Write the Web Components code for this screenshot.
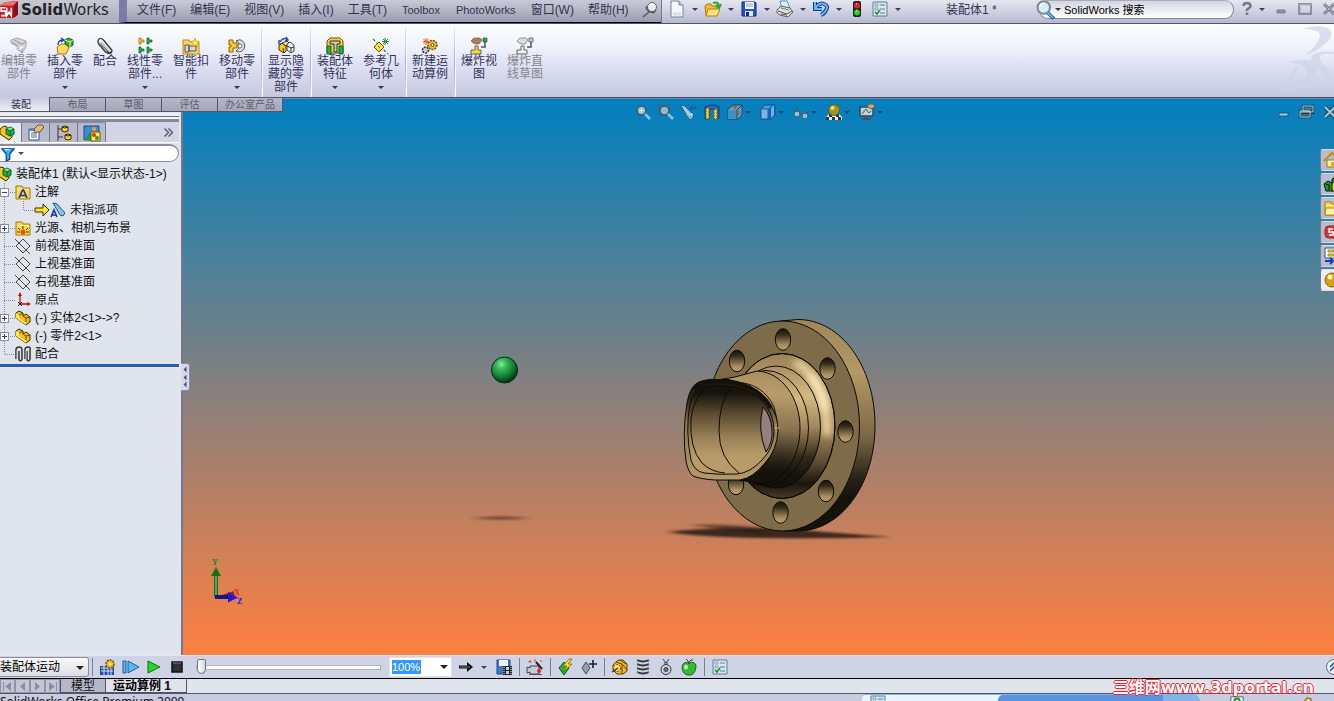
<!DOCTYPE html>
<html lang="zh-CN">
<head>
<meta charset="utf-8">
<title>SolidWorks</title>
<style>
  html, body { height: 100%; margin: 0; overflow: hidden; background: #e0e4ec; }
  body { font: 12px/18px "Liberation Sans", "Noto Sans CJK SC", sans-serif; color: #111; }
</style>
</head>
<body>
<sw-app></sw-app>

<script>
// 16x16 icon set
const cube = '<path d="M1 4l4-3 3 1v4l5 3v3l-3 3-9-6z" fill="#f6c81c" stroke="#3a2a00"/><path d="M7 4l4-2 4 2v5l-4 2-4-2z" fill="#2fa83a" stroke="#063"/><path d="M7 4l4 2 4-2M11 6v5" stroke="#063" fill="none"/><path d="M8 3.8l3-1.300 3 1.300-3 1.400z" fill="#8be88f"/>';
const part = '<path d="M1 3l3-2 4 2v3l3-2 4 3v5l-4 3L1 8z" fill="#f2bf12" stroke="#3a2800"/><path d="M1 3l3 2v3l7 5v2L1 8z" fill="#ffe860"/><path d="M8 6l3 2v4M4 5l4-2M11 8l4-1" stroke="#6b4a00" fill="none"/>';
const list = '<path d="M1 1h14v14H1z" fill="#d5e7ef" stroke="#5f7f95"/><path d="M3 3h3v2H3zM3 7h3v2H3z" fill="#fff" stroke="#5f7f95" stroke-width=".7"/><path d="M8 4h5M8 8h5M8 12h5" stroke="#5f7f95"/><path d="M3 11l2 2 3-4" stroke="#0a9a20" stroke-width="1.6" fill="none"/>';
const folder = '<path d="M1 4V2h6l1 2h7v11H1z" fill="#ffd84a" stroke="#a8780a"/><path d="M2 5h12v1H2z" fill="#fff2b0"/>';
const lens = '<circle cx="6.500" cy="6.500" r="4.500" fill="#8cb8d0" stroke="#3d5668" stroke-width="1.500"/><path d="M10 10l5 5" stroke="#8cc0e8" stroke-width="2.500"/>';
const explode = (a, b, c) => `<path d="M0 3l3-3h6l2 2-3 4H5L2 5z" fill="${a}" stroke="#555" stroke-width=".6"/><path d="M12 0h4v4h-4z" fill="${b}" stroke="#333" stroke-width=".6"/><path d="M14 4v5h-4" stroke="#555" stroke-width="1.500" fill="none"/><path d="M4 8h3v4h3v4H0v-4h4z" fill="${c}" stroke="#665"/>`;

const ICONS = {
  logo: '<path d="M0 4l4-3 12-1v12l-4 3L0 15z" fill="#c62028"/><path d="M0 4l4-3 12-1-4 4z" fill="#ef7070"/><path d="M12 4l4-4v12l-4 3z" fill="#8a1018"/><path d="M5 6H1v3h4v4H1M6 6v7l2-3 2 3V6" stroke="#fff" stroke-width="1.400" fill="none"/>',
  pin: '<path d="M1 15l6-5" stroke="#555" stroke-width="1.500"/><path d="M4 5q0 5 8 6l2-3-5-6z" fill="#777" stroke="#444"/><circle cx="10" cy="5" r="4.500" fill="#e8e8ee" stroke="#666"/><path d="M8 4q2-3 4-1" stroke="#fff" fill="none" stroke-width="1.500"/>',
  new: '<path d="M2 0h8l4 4v12H2z" fill="#f4f8fb" stroke="#6d8796"/><path d="M10 0v4h4" fill="#c8dbe4" stroke="#6d8796"/><path d="M4 13h8" stroke="#d0dfe8" stroke-width="3"/>',
  open: '<path d="M0 5l2-2h4l1 2h4v9H1z" fill="#f5b935" stroke="#b87b10"/><path d="M3 8h12l-3 7H1z" fill="#ffe480" stroke="#b87b10"/><path d="M8 2q5-2 6 3M11 4l3 3 2-4" stroke="#2aa830" stroke-width="2" fill="none"/>',
  save: '<path d="M1 1h13l1 1v13H1z" fill="#2456c8" stroke="#0d2a80"/><path d="M4 1h9v7H4z" fill="#f0f4fa"/><path d="M5 3h7M5 5h7" stroke="#9aa"/><path d="M4 10h8v5H4z" fill="#dde4ee"/><path d="M5 11h3v4H5z" fill="#123080"/>',
  print: '<path d="M3 0h7l3 7H5z" fill="#dff0ff" stroke="#5a8fc8"/><path d="M0 9l4-4 9 2 3 4-5 5-8-2-3-2z" fill="#e0e0dc" stroke="#606060"/><path d="M1 10l9 3 5-3M4 13l6 1" stroke="#555" fill="none"/><path d="M4 7l8 2" stroke="#777" fill="none"/>',
  undo: '<path d="M2 1v7h7M2 8q4-7 9-5t2 6q-1 3-5 5" fill="none" stroke="#123f9a" stroke-width="4"/><path d="M2 1v7h7M2 8q4-7 9-5t2 6q-1 3-5 5" fill="none" stroke="#68b4f4" stroke-width="2"/>',
  light: '<rect x="4" y="0" width="8" height="16" rx="2" fill="#222"/><circle cx="8" cy="4.500" r="3" fill="#f02020"/><circle cx="8" cy="11.500" r="3" fill="#28d028"/><path d="M7 3h1M7 10h1" stroke="#fff"/>',
  list,
  search: '<circle cx="7" cy="6" r="5" fill="#d8ecf8" stroke="#788894" stroke-width="1.600"/><path d="M4 5q1-3 4-2" stroke="#fff" fill="none"/><path d="M10 10l5 5" stroke="#2e6ea8" stroke-width="3"/><path d="M10 10l4 4" stroke="#86c0ee"/>',
  help: '<path d="M4.500 5q0-3 3.500-3t3.500 3q0 1.500-2 2.500T8 10M8 11.500v2.500" stroke="#74768c" stroke-width="2.500" fill="none"/>',
  min: '<path d="M4 9h8v3H4z" fill="#9295ac" stroke="#707388" stroke-width=".8"/>',
  max: '<path d="M2 3h12v10H2z" fill="none" stroke="#777a90" stroke-width="1.500"/><path d="M2 4h12M3.500 6v5.500h9" stroke="#b8bace" fill="none"/>',
  close: '<path d="M3 3l10 10M13 3L3 13" stroke="#777a90" stroke-width="3"/><path d="M3 3l10 10M13 3L3 13" stroke="#b4b7ca"/>',
  docmin: '<path d="M3 9h9v3H3z" fill="#9ccbe0" stroke="#284050" stroke-width=".8"/>',
  docrestore: '<path d="M4 2h10v7H4zM1 7h10v6H1z" fill="#477890" stroke="#1d3848" stroke-width="2.500"/><path d="M4 2h10v6h-3V7H4zM1 7h10v6H1zM1 8h10" fill="none" stroke="#aad4e5"/>',
  docclose: '<path d="M3 3l10 10M13 3L3 13" stroke="#284050" stroke-width="4"/><path d="M3 3l10 10M13 3L3 13" stroke="#9ccbe0" stroke-width="2"/>',
  editpart: '<path d="M0 2l6-2 9 3v6l-4 6-5-4 1-2-7-4z" fill="#d5d5da" stroke="#a8a8ae"/><path d="M7 5l4 1 4-2M11 6v9M1 4l6 4M3 2l6 3" stroke="#999" fill="none"/><path d="M9 9l3-2v3l-3 2z" fill="#f5f5f5"/>',
  insert: '<path d="M0 9l4-3h5l3 4-3 6H1z" fill="#ffd860" stroke="#a67810"/><path d="M1 7q0-5 5-5M4 0l3 2-3 2" stroke="#1c40b8" stroke-width="1.300" fill="none"/><path d="M8 2l3-2 5 2v5l-3 2-5-3z" fill="#38a840" stroke="#063"/><path d="M8 2l5 2 3-2M13 4v5" stroke="#fff36a" fill="none"/>',
  clip: '<path d="M3.500 5.500l7 8q3.500 2.500 4.500-1L6.500 2Q3-1.500 1 2.500q-.5 2 1.500 4.500l6 7q4 3 6.500 0" fill="none" stroke="#3c3c3c" stroke-width="1.400"/><path d="M4.500 3.500l7.500 9M2.500 4l7 9" stroke="#b5b5b5" fill="none"/>',
  pattern: '<g fill="#28b038" stroke="#06601c" stroke-width=".7"><path d="M10 0h2v2h3v2h-3v2h-2zM2 9h2v2h3v2H4v2H2zM10 9h2v2h3v2h-3v2h-2z"/></g><path d="M2 0h2v2h3v2H4v2H2z" fill="#ffc828" stroke="#a06000" stroke-width=".7"/>',
  fastener: '<path d="M0 2h6l1 2h9v12H0z" fill="#ffd568" stroke="#bd8412"/><path d="M2 7h4v7H2zM6 8h7v5H6z" fill="#d8d8d4" stroke="#555"/><path d="M12 0l1 3 3 .5-2 2 .5 3-2.500-1.500-2.500 1.500.5-3-2-2 3-.5z" fill="#fff04a" stroke="#c08000" stroke-width=".6"/>',
  move: '<path d="M0 2h4v3h4v5H4v4H0V9h2V7H0z" fill="#ffcc30" stroke="#8d6300"/><path d="M7 3q7-4 9 5-2 8-9 5l3-3q-3-2 0-5z" fill="#dedee2" stroke="#555"/><circle cx="11" cy="8" r="2" fill="#fff" stroke="#777"/>',
  showhide: '<path d="M2 4q3-5 7-3M8-1l2 3-3 1M1 2v4h3" stroke="#2050c0" stroke-width="1.400" fill="none"/><path d="M1 8l3-3 4 3v5l-2 2-5-3z" fill="#ffc520" stroke="#4b3200"/><path d="M4 5l5-2 2 2-3 3zM6 15l-1-5" fill="#ffe67a" stroke="#4b3200"/><path d="M9 6l3-2 4 3v6l-3 2-4-3z" fill="#eee" stroke="#444"/><path d="M9 8l4 2v4M13 10l3-1" stroke="#333" fill="none"/>',
  feature: '<path d="M0 3l3-3h10l3 3v12H0z" fill="#ffd335" stroke="#725000"/><path d="M0 8h4v8H0zM12 8h4v8h-4z" fill="#28b030" stroke="#064"/><path d="M3 3h10v3h-3v8H7V6H3z" fill="#c8c8c8" stroke="#333"/>',
  refgeo: '<path d="M0 1l15 15" stroke="#139028" stroke-dasharray="3 2" stroke-width="1.300"/><path d="M6 4l5 5-5 5-5-5z" fill="#ffdf38" stroke="#5d5000"/><path d="M12 0v7M9 3.500h7M10 1l5 5M15 1l-5 5" stroke="#139028"/><path d="M5 8l2 2" stroke="#139028"/>',
  motion: '<circle cx="10.500" cy="7" r="4.500" fill="#f0c030" stroke="#715000" stroke-width="1.500" stroke-dasharray="2 1"/><circle cx="10.500" cy="7" r="1.500" fill="#fff" stroke="#715000"/><circle cx="3.500" cy="12" r="3" fill="#ccc" stroke="#333" stroke-width="1.500" stroke-dasharray="2 1"/><path d="M4 0v7M1 3.500h6M1.500 1l5 5M6.500 1l-5 5" stroke="#f25a10"/>',
  explode: explode('#ad8050', '#20b040', '#ffd73a'),
  explodeline: explode('#ddd', '#ccc', '#eee'),
  zoomfit: lens + '<path d="M6.500 4v5M4 6.500h5" stroke="#eaf8ff" stroke-width="1.200"/>',
  zoomarea: '<path d="M.5.500h11v11H.5z" fill="none" stroke="#485f6c" stroke-dasharray="2 1"/>' + lens,
  prevview: '<path d="M0 1l4 1 9 9-1 3-3 2-4-5z" fill="#80b8dc" stroke="#305878"/><path d="M1 2l8 9M8 11l4-1" stroke="#d0eeff"/><path d="M9 4h7M9 4l2-2M9 4l2 2" stroke="#2d4890" fill="none"/>',
  section: '<path d="M1 3q7-4 14 0v11H11V5H5v10H1z" fill="#2d68bc" stroke="#163b66"/><path d="M2 4h3v11H2zM10 5h3v10h-3z" fill="#ecd335" stroke="#765e10" stroke-dasharray="2 1"/>',
  orient: '<path d="M1 5l5-4h9v10l-4 4H1z" fill="#6f9ab2" stroke="#2d4350"/><path d="M1 6h9v9H1z" fill="#3a91cc"/><path d="M10 6l5-5M10 6v9" stroke="#304550"/><path d="M8 1v4M6 3h4M12 7v4" stroke="#a34343"/>',
  display: '<path d="M1 5l4-4h10v10l-4 4H1z" fill="#4d9fe0" stroke="#1c4b87"/><path d="M1 5h7v10H1z" fill="#75b8e8" stroke="#28588d"/><path d="M8 5l4-4h3v10l-4 4H8z" fill="#1b62b4"/><path d="M11 4l3-3v10l-3 3z" fill="#67b1f0"/>',
  glasses: '<circle cx="4" cy="10" r="3" fill="#8fbfd5" stroke="#3b5866"/><circle cx="12" cy="12" r="3" fill="#8fbfd5" stroke="#3b5866"/><path d="M7 10l2 1M1 9l4-6M14 9l2-3" stroke="#3b5866" fill="none"/>',
  scene: '<path d="M0 13l3-3h10l3 3v3H0z" fill="#e5f0f0"/><path d="M0 13h3v3H0zM6 13h3v3H6zM12 13h3v3h-3zM3 10h3v3H3zM10 10h3v3h-3z" fill="#293840"/><circle cx="8" cy="6" r="5.500" fill="#a49428" stroke="#686018"/><circle cx="6.500" cy="4" r="2" fill="#e9e083"/>',
  settings: '<path d="M1 3h13v9H1z" fill="#bdd2dd" stroke="#314856" stroke-width="1.500"/><path d="M6 12h3v2h3v2H3v-2h3z" fill="#41535d"/><path d="M3 10l4-5 3 4 2-2" stroke="#425c69" fill="none"/><path d="M8 3l2-3h4l2 2-3 3z" fill="#c2aa7d" stroke="#6c5d40"/>',
  assembly: cube,
  props: '<path d="M1 4h10v11H1z" fill="#f8fbff" stroke="#28588c"/><path d="M1 4h10v2H1z" fill="#398bdc"/><path d="M3 8h6M3 10h6M3 12h6" stroke="#50718e"/><path d="M6 4l4-4h4l2 2-4 5H9l-2 1z" fill="#e4b886" stroke="#76502c"/>',
  config: '<path d="M2 0v16M2 4h4M2 12h5" stroke="#333" fill="none"/><path d="M6 2l3-1 3 1v4L9 7 6 6zM9 10l3-1 3 1v4l-3 1-3-1z" fill="#ffd620" stroke="#3b2a00"/><path d="M6 2l3 1 3-1M9 10l3 1 3-1" stroke="#3b2a00" fill="none"/>',
  display2: '<path d="M0 1h15v14H0z" fill="#398dde" stroke="#254c74"/><path d="M0 15l6-8 5 8z" fill="#1a9c4c"/><circle cx="10" cy="4" r="2" fill="#ff9b25"/><path d="M7 7h9v9H7z" fill="#ffec54" stroke="#745b00"/><circle cx="10" cy="10" r="2" fill="#e23131"/><circle cx="13" cy="13" r="2" fill="#20a040"/>',
  filter: '<path d="M1 2h14L10 8v6l-4 2V8z" fill="#3aaff0" stroke="#0b3f9a" stroke-width="1.400"/><path d="M4 3h6" stroke="#c9efff" stroke-width="1.500"/>',
  notes: folder + '<path d="M4 14l3.500-8h1l3.500 8M5.500 11.500h5" stroke="#1836a0" stroke-width="1.700" fill="none"/>',
  lights: folder + '<circle cx="8" cy="12" r="2.500" fill="#d85b10"/><path d="M8 6v3M3 8l2 2M13 8l-2 2M2 12h3M14 12h-3" stroke="#6b2800"/>',
  yarrow: '<path d="M1 6h8V2l6 6-6 6v-4H1z" fill="#ffe818" stroke="#383000"/>',
  anno: '<path d="M3 1l4 1 8 9-2 3-3-1z" fill="#88c4ef" stroke="#24547f"/><path d="M1 15L4 8l3 7M2 13h4" stroke="#1733a5" stroke-width="1.600" fill="none"/>',
  plane: '<path d="M8 1l7 7-7 7-7-7zM0 1l15 15" fill="none" stroke="#333" stroke-width=".9"/>',
  origin: '<path d="M5 13V2M5 12h9" stroke="#b41218" stroke-width="1.300"/><path d="M3 4l2-4 2 4zM12 10l4 2-4 2z" fill="#b41218"/><path d="M3 10l4 4M7 10l-4 4" stroke="#222"/>',
  part,
  mates: '<path d="M1 13V4q0-3 3-3t3 3v9q-1 3-3 1V5M10 13V4q0-3 3-3t2 3v9q-1 3-3 1V5" fill="none" stroke="#333" stroke-width="1.500"/><path d="M2 4v9M11 4v9" stroke="#bbb"/>',
  home: '<path d="M3 8h10v7H3z" fill="#fff3ba" stroke="#9e7410"/><path d="M0 9l8-8 8 8" fill="none" stroke="#c78d11" stroke-width="2"/><path d="M7 10h3v5H7z" fill="#e8ae26"/>',
  library: '<path d="M0 8l4-3 4 2V3l4-2 4 2v12H2z" fill="#20933d" stroke="#111"/><path d="M8 7l4-2 4 2v8H8z" fill="#ffd822" stroke="#111"/><path d="M2 8l3 1v5" stroke="#111" fill="none"/>',
  files: folder + '<path d="M2 8h14v7H1z" fill="#fff1a8" stroke="#b7850e"/>',
  swsearch: '<rect x="1" y="2" width="15" height="12" rx="4" fill="#d53a42" stroke="#8c1c22"/><path d="M9 5H5v3h4v3H5" stroke="#fff" stroke-width="1.500" fill="none"/>',
  palette: '<path d="M1 0h12v10H1z" fill="#fff" stroke="#2858a0"/><path d="M4 2h6v2H4zM4 6h6v2H4z" fill="#e9d33e" stroke="#777000" stroke-width=".7"/><path d="M1 13h8M6 10l3 3-3 3" stroke="#1739bc" stroke-width="1.800" fill="none"/>',
  ball: '<circle cx="8" cy="8" r="7" fill="#d6a012" stroke="#8a6000"/><circle cx="6" cy="5" r="2.500" fill="#fff5b0"/>',
  calc: '<path d="M0 7h14v9H0z" fill="#244f9c"/><path d="M1 9h12M1 12h12M4 7v9M8 7v9M11 7v9" stroke="#d6e3ff"/><circle cx="10" cy="5" r="4" fill="#f2c020" stroke="#6c4b00" stroke-width="1.500" stroke-dasharray="2 1"/><circle cx="10" cy="5" r="1" fill="#fff"/>',
  playstart: '<path d="M0 2h3v12H0z" fill="#58b8f4" stroke="#165f9d"/><path d="M5 2l11 6-11 6z" fill="#58b8f4" stroke="#165f9d"/>',
  play: '<path d="M2 2l12 6-12 6z" fill="#23d629" stroke="#08750e"/>',
  stop: '<path d="M3 3h10v10H3z" fill="#303030" stroke="#101010" stroke-width="1.500"/><path d="M4 4h8" stroke="#777"/>',
  arrow: '<path d="M1 6.500h8V3l6 5-6 5V9.500H1z" fill="#111"/><path d="M2 8h10" stroke="#778"/>',
  savefilm: '<path d="M1 1h13v14H1z" fill="#3a79c8" stroke="#174b8f"/><path d="M3 1h9v6H3z" fill="#eef"/><path d="M7 7h9v9H7z" fill="#222"/><path d="M8 8v7M15 8v7" stroke="#fff" stroke-dasharray="1 1"/><path d="M10 8h3v3h-3zM10 12h3v3h-3z" fill="#ccd"/>',
  wizard: '<path d="M0 8l3 1V7h9v8H3v-2l-3 1z" fill="#c9ccd0" stroke="#444"/><path d="M9 3l6 7" stroke="#222" stroke-width="2"/><circle cx="12" cy="12" r="2" fill="#d52830"/><path d="M3 1v3M1.500 2.500h3M8 0v3M14 1v2" stroke="#e14d20"/><path d="M2 15.500h13" stroke="#555"/>',
  autokey: '<path d="M6 3l5 6-5 7-5-7z" fill="#25b535" stroke="#065f17"/><path d="M11 0L5 7h4l-4 6 9-8h-4l4-5z" fill="#ffe039" stroke="#856200" stroke-width=".8"/>',
  addkey: '<path d="M5 3l4 6-4 6-4-6z" fill="#999da5" stroke="#4b4e55"/><path d="M12 1v8M8 5h8" stroke="#222" stroke-width="1.600"/>',
  motor: '<path d="M1 6l5-5h5l4 4v7l-4 3H5l-4-4z" fill="#efba23" stroke="#604000"/><path d="M4 3l6 2 5 6M8 1l6 4M10 5v10" stroke="#604000" fill="none"/><circle cx="5" cy="9" r="3.500" fill="#ffe270" stroke="#604000" stroke-dasharray="2 1"/><path d="M0 13l6-4" stroke="#333" stroke-width="1.500"/>',
  spring: '<path d="M2 1q6 3 12 0M2 5q6 3 12 0M2 9q6 3 12 0M2 13q6 3 12 0" fill="none" stroke="#333" stroke-width="1.800"/><path d="M2.500 1v13M13.500 1v13" stroke="#777" stroke-dasharray="2 2"/>',
  contact: '<path d="M5 0l3 4 3-4M6 4h4" stroke="#444" fill="none"/><circle cx="8" cy="10.500" r="5" fill="#cbd2da" stroke="#333"/><circle cx="8" cy="10.500" r="2" fill="#6f7c88" stroke="#333"/>',
  apple: '<path d="M8 4q5-2 7 2 0 8-5 10H6Q1 14 1 8q1-6 7-4z" fill="#38b934" stroke="#11691a"/><path d="M8 5q-1-4-3-5M8 3q2-3 4-2" stroke="#333" fill="none"/><ellipse cx="5" cy="8" rx="2" ry="2.500" fill="#b6f2a8"/>',
  collapse: '<circle cx="8" cy="8" r="7.500" fill="#f2f4fa" stroke="#666b80"/><path d="M4 8l4-4 4 4M4 12l4-4 4 4" fill="none" stroke="#1c45ad" stroke-width="1.500"/>',
  askbox: '<path d="M1 1h14v14H1z" fill="#fff" stroke="#36507c"/><path d="M5 6q0-3 3-3t3 3-3 4" fill="none" stroke="#15a322" stroke-width="2.500"/>',
  tag: '<path d="M2 13L10 2l5 1v5L6 15z" fill="#f0b828" stroke="#7c5400"/><circle cx="12" cy="5" r="1" fill="#fff"/>'
};

class SwElement extends HTMLElement {
  connectedCallback() {
    if (this.shadowRoot) return;
    this.attachShadow({ mode: 'open' });
    this.shadowRoot.innerHTML = `<style>
      * { box-sizing: border-box; }
      button { font: inherit; color: inherit; border: 0; padding: 0; background: none; }
      ${this.styles()}</style>${this.markup()}`;
  }
  attr(name) { return this.getAttribute(name) || ''; }
}

class SwIcon extends SwElement {
  styles() { return ':host { display: inline-block; flex: none; width: 16px; height: 16px; } svg { display: block; width: 100%; height: 100%; overflow: visible; }'; }
  markup() { return `<svg viewBox="0 0 16 16" aria-hidden="true">${ICONS[this.attr('name')]}</svg>`; }
}

// small triangle used by every drop-down
class SwCaret extends SwElement {
  styles() { return ':host { display: block; width: 0; border: 3px solid transparent; border-top-color: currentColor; border-bottom: 0; }'; }
  markup() { return ''; }
}

class SwTool extends SwElement {
  styles() {
    return `
      :host { display: flex; align-items: center; flex: none; color: #3a3c58; }
      button { display: flex; align-items: center; justify-content: center; }
      .drop { width: var(--drop-width, 20px); height: 16px; }`;
  }
  markup() {
    const drop = this.hasAttribute('drop') ? '<button class="drop" aria-label="more"><sw-caret></sw-caret></button>' : '';
    return `<button aria-label="${this.attr('icon')}"><sw-icon name="${this.attr('icon')}"></sw-icon></button>${drop}`;
  }
}

class SwMenuItem extends SwElement {
  styles() { return ':host { display: block; } button { padding: 0 7px; line-height: 18px; white-space: nowrap; } :host([latin]) button { padding: 0 8px; font-size: 11px; }'; }
  markup() { return '<button><slot></slot></button>'; }
}

class SwTitleBar extends SwElement {
  styles() {
    return `
      :host { display: flex; height: 24px; flex: none; border-bottom: 1px solid #50526a; overflow: hidden;
        background: linear-gradient(#e4e6f0, #d0d2e2 50%, #b6b8ce); color: #33334f; }
      .brand { display: flex; align-items: center; gap: 3px; width: 119px; flex: none; padding-bottom: 4px;
        background: linear-gradient(#c6c8d4, #aaacba); font: 15px/18px "DejaVu Sans", sans-serif; color: #222; white-space: nowrap; }
      .brand sw-icon { width: 18px; height: 18px; }
      nav { display: flex; align-items: center; flex: none; padding: 0 0 2px 3px; border-left: 8px solid #7a7ba6;
        background: linear-gradient(#c8cad8, #aeb0c0 60%, #989aae); border-bottom: 1px solid #000; }
      nav sw-tool { margin: 0 3px 0 6px; }
      .quick { display: flex; align-items: center; flex: none; padding: 0 0 5px 7px; border-left: 1px solid #77798e; }
      .quick .end { margin-left: 7px; }
      .doc { flex: 1; text-align: center; line-height: 21px; white-space: nowrap; }
      .search { display: flex; align-items: center; width: 195px; height: 19px; margin-left: 4px; border: 1px solid #85879a; border-top-color: #a8aabb;
        border-radius: 9px; background: linear-gradient(#d4d6e0, #fff); color: #33334f; }
      .search sw-icon { width: 20px; height: 20px; margin-left: -5px; }
      .search input { flex: 1; min-width: 0; border: 0; background: none; outline: 0; padding: 0 3px; font: 11px/16px "Liberation Sans", "Noto Sans CJK SC", sans-serif; color: #000; }
      .window { display: flex; align-items: flex-start; width: 100px; flex: none; padding-top: 1px; overflow: hidden; }
      .window sw-tool { width: 24px; justify-content: center; }
      .window sw-tool[drop] { width: 35px; justify-content: flex-end; --drop-width: 14px; }`;
  }
  markup() {
    return `
      <div class="brand"><sw-icon name="logo"></sw-icon><span><b>Solid</b>Works</span></div>
      <nav>
        <sw-menu-item>文件(F)</sw-menu-item><sw-menu-item>编辑(E)</sw-menu-item>
        <sw-menu-item>视图(V)</sw-menu-item><sw-menu-item>插入(I)</sw-menu-item>
        <sw-menu-item>工具(T)</sw-menu-item><sw-menu-item latin>Toolbox</sw-menu-item>
        <sw-menu-item latin>PhotoWorks</sw-menu-item><sw-menu-item>窗口(W)</sw-menu-item>
        <sw-menu-item>帮助(H)</sw-menu-item><sw-tool icon="pin"></sw-tool>
      </nav>
      <div class="quick">
        <sw-tool icon="new" drop></sw-tool><sw-tool icon="open" drop></sw-tool><sw-tool icon="save" drop></sw-tool>
        <sw-tool icon="print" drop></sw-tool><sw-tool icon="undo" drop></sw-tool><sw-tool icon="light"></sw-tool>
        <sw-tool icon="list" class="end" drop></sw-tool>
      </div>
      <div class="doc">装配体1 *</div>
      <div class="search"><sw-icon name="search"></sw-icon><sw-caret></sw-caret><input value="SolidWorks 搜索" aria-label="SolidWorks 搜索"></div>
      <div class="window"><sw-tool icon="help" drop></sw-tool><sw-tool icon="min"></sw-tool><sw-tool icon="max"></sw-tool><sw-tool icon="close"></sw-tool></div>`;
  }
}

class SwCommand extends SwElement {
  styles() {
    return `
      :host { display: block; width: 46px; flex: none; color: #33335c; }
      :host([narrow]) { width: 34px; }
      :host([off]) { color: #85858c; }
      button { display: flex; flex-direction: column; align-items: center; width: 100%; line-height: 13px; }
      .label { display: block; margin-top: 1px; text-align: center; }
      sw-caret { margin-top: 5px; }`;
  }
  markup() {
    return `<button ${this.hasAttribute('off') ? 'disabled' : ''}><sw-icon name="${this.attr('icon')}"></sw-icon>
      <span class="label"><slot></slot></span>${this.hasAttribute('drop') ? '<sw-caret></sw-caret>' : ''}</button>`;
  }
}

class SwRibbon extends SwElement {
  styles() {
    return `
      :host { display: flex; justify-content: space-between; flex: none; height: 74px; overflow: hidden; border-bottom: 1px solid #4c4e68;
        background: linear-gradient(#fcfdfd, #f1f3fd 30%, #dcdff2 60%, #c6c8de); }
      .commands { display: flex; margin-left: -4px; padding-top: 14px; }
      i { width: 1px; margin: -10px 1px 0; background: linear-gradient(#e4e6f2, #aeb0c6 50%, #d6d8e8); box-shadow: 1px 0 #f8f8ff; }
      svg { width: 72px; height: 73px; flex: none; }`;
  }
  markup() {
    return `
      <div class="commands">
        <sw-command icon="editpart" off>编辑零<br>部件</sw-command>
        <sw-command icon="insert" drop>插入零<br>部件</sw-command>
        <sw-command icon="clip" narrow>配合</sw-command>
        <sw-command icon="pattern" drop>线性零<br>部件...</sw-command>
        <sw-command icon="fastener">智能扣<br>件</sw-command>
        <sw-command icon="move" drop>移动零<br>部件</sw-command><i></i>
        <sw-command icon="showhide">显示隐<br>藏的零<br>部件</sw-command><i></i>
        <sw-command icon="feature" drop>装配体<br>特征</sw-command>
        <sw-command icon="refgeo" drop>参考几<br>何体</sw-command><i></i>
        <sw-command icon="motion">新建运<br>动算例</sw-command><i></i>
        <sw-command icon="explode">爆炸视<br>图</sw-command>
        <sw-command icon="explodeline" off>爆炸直<br>线草图</sw-command>
      </div>
      <svg viewBox="0 0 72 73" fill="#cfd6ea" opacity=".75" aria-hidden="true">
        <path d="M41 5q12-5 24-1 8 4 1 13-8 9-22 14 10-9 13-16 5-10-16-10z"/>
        <path d="M26 38q18-4 27 0 7 5-3 16-11 11-26 13L19 71l13-28 5 0-11 22q13-5 18-14 5-10-18-13z"/>
        <path d="M72 28q-17-2-22 4-3 5 6 13 9 7 4 13-5 4-20 3l-3 3q22 1 30-6 7-7-4-16-8-7-4-11 4-2 13-1z"/>
      </svg>`;
  }
}

class SwCommandTabs extends SwElement {
  styles() {
    return `
      :host { display: flex; align-items: stretch; height: 15px; font-size: 10px; line-height: 13px; color: #5c5d68; }
      button { min-width: 56px; padding: 0 7px; border: 1px solid #53566c; border-left: 0; background: linear-gradient(#b6b8c8, #a4a6ba); white-space: nowrap; }
      button.on { min-width: 50px; padding: 0 7px 0 0; border-top: 0; color: #33334f; background: linear-gradient(#c6c8de, #eceef4); }`;
  }
  markup() { return '<button class="on">装配</button><button>布局</button><button>草图</button><button>评估</button><button>办公室产品</button>'; }
}

class SwTreeRow extends SwElement {
  styles() {
    return `
      :host { display: flex; align-items: center; height: 18px; white-space: nowrap; }
      .gutter { position: relative; width: 15px; height: 18px; flex: none; }
      :host([level="0"]) .gutter { width: 0; }
      :host([level="2"]) .gutter { width: 34px; }
      svg { display: block; width: 100%; height: 18px; overflow: hidden; }
      path { stroke: #8a8c94; stroke-dasharray: 1 1; fill: none; }
      .gutter button { position: absolute; left: 0; top: 5px; width: 9px; height: 9px; border: 1px solid #8b8fa4; background: #fff; }
      .gutter button::before, .gutter button.plus::after { content: ""; position: absolute; left: 1px; top: 3px; width: 5px; height: 1px; background: #26467c; }
      .gutter button.plus::after { transform: rotate(90deg); }
      :host([level="0"]) sw-icon { margin-left: -4px; }
      .text { margin-left: 4px; line-height: 20px; }`;
  }
  markup() {
    const level = this.attr('level') || '1';
    const line = level === '0' ? '' : level === '2' ? 'M4.500 0v18M23.500 0v9.500h11' : this.hasAttribute('last') ? 'M4.500 0v9.500H15' : 'M4.500 0v18M4 9.500h11';
    const box = this.attr('box') ? `<button class="${this.attr('box')}" aria-label="${this.attr('box')}"></button>` : '';
    return `<div class="gutter"><svg><path d="${line}"/></svg>${box}</div>
      ${level === '2' ? '<sw-icon name="yarrow"></sw-icon>' : ''}<sw-icon name="${this.attr('icon')}"></sw-icon>
      <span class="text"><slot></slot></span>`;
  }
}

class SwFeaturePanel extends SwElement {
  styles() {
    return `
      :host { position: relative; display: flex; flex-direction: column; width: 183px; flex: none; padding: 15px 2px 0 0; background: #e0e4ec; border-right: 2px solid #75778e; }
      .grip { height: 9px; flex: none; background: linear-gradient(#eef0f6 0 3px, #666880 3px 4px, #f5f6fa 4px 6px, #8688a0 6px 9px); }
      .tabs { display: flex; height: 21px; flex: none; border-bottom: 1px solid #fff; background: #d2d5e6; }
      .tabs button { width: 28px; border-right: 1px solid #77798e; border-top: 1px solid #8a8ca0; background: #b8bacc; display: flex; justify-content: center; align-items: center; }
      .tabs button.on { width: 22px; background: #e8eaf2; justify-content: flex-start; }
      .tabs .on sw-icon { margin-left: -1px; }
      .tabs .more { flex: 1; border: 0; background: none; justify-content: flex-end; padding-right: 6px; }
      .more svg { width: 9px; height: 9px; fill: none; stroke: #555870; stroke-width: 1.4; }
      .filter { display: flex; align-items: center; height: 18px; flex: none; margin: 1px 0 3px -8px; padding-left: 8px; border: 2px solid #8a8ca2; border-width: 2px 1px 1px;
        border-radius: 9px; background: #fff; }
      .filter sw-icon { width: 14px; height: 14px; }
      .filter sw-caret { margin-left: 3px; color: #444666; }
      .filter input { flex: 1; min-width: 0; border: 0; outline: 0; height: 12px; background: none; }
      .tree { border-bottom: 2px solid #1e5fc4; box-shadow: 0 1px #50546c; padding-bottom: 1px; }
      .handle { position: absolute; z-index: 2; left: 181px; top: 265px; width: 9px; height: 28px; display: flex; flex-direction: column; justify-content: space-evenly; align-items: center;
        background: #d6d9e8; border: 1px solid #8a8ca4; border-left: 0; border-radius: 0 3px 3px 0; color: #4b4d90; }
      .handle sw-caret { transform: rotate(90deg); }`;
  }
  markup() {
    return `
      <div class="grip"></div>
      <div class="tabs">
        <button class="on" aria-label="feature tree"><sw-icon name="assembly"></sw-icon></button>
        <button aria-label="properties"><sw-icon name="props"></sw-icon></button>
        <button aria-label="configurations"><sw-icon name="config"></sw-icon></button>
        <button aria-label="display"><sw-icon name="display2"></sw-icon></button>
        <button class="more" aria-label="more"><svg viewBox="0 0 9 9"><path d="M.5.500l4 4-4 4M4.500.500l4 4-4 4"/></svg></button>
      </div>
      <div class="filter"><sw-icon name="filter"></sw-icon><sw-caret></sw-caret><input aria-label="filter"></div>
      <div class="tree">
        <sw-tree-row level="0" icon="assembly">装配体1 (默认&lt;显示状态-1&gt;)</sw-tree-row>
        <sw-tree-row icon="notes" box="minus">注解</sw-tree-row>
        <sw-tree-row level="2" icon="anno">未指派项</sw-tree-row>
        <sw-tree-row icon="lights" box="plus">光源、相机与布景</sw-tree-row>
        <sw-tree-row icon="plane">前视基准面</sw-tree-row>
        <sw-tree-row icon="plane">上视基准面</sw-tree-row>
        <sw-tree-row icon="plane">右视基准面</sw-tree-row>
        <sw-tree-row icon="origin">原点</sw-tree-row>
        <sw-tree-row icon="part" box="plus">(-) 实体2&lt;1&gt;-&gt;?</sw-tree-row>
        <sw-tree-row icon="part" box="plus">(-) 零件2&lt;1&gt;</sw-tree-row>
        <sw-tree-row icon="mates" last>配合</sw-tree-row>
      </div>
      <button class="handle" aria-label="collapse panel"><sw-caret></sw-caret><sw-caret></sw-caret><sw-caret></sw-caret></button>`;
  }
}

class SwViewport extends SwElement {
  styles() {
    return `
      :host { position: relative; display: block; flex: 1; min-width: 0; overflow: hidden; border-top: 1px solid #6888a0;
        background: linear-gradient(#0080c0, #808080 50%, #ff8040); }
      .scene { position: absolute; inset: 0; width: 100%; height: 100%; }
      .heads { position: absolute; left: 3px; right: 0; top: 5px; display: flex; justify-content: center; gap: 7px; --drop-width: 10px; }
      .heads sw-tool, .doc sw-tool { color: #2e4a66; }
      .doc { position: absolute; right: -4px; top: 5px; display: flex; gap: 7px; }
      .tasks { position: absolute; right: 0; top: 50px; width: 14px; display: flex; flex-direction: column; gap: 2px; }
      .tasks button { height: 22px; padding: 0 0 0 3px; background: #b9bccd; border: 1px solid #d8dae6; border-left-color: #777c94; border-right: 0; border-radius: 3px 0 0 3px; overflow: hidden; display: flex; align-items: center; }
      .tasks button:last-child { background: #eceef4; }
      text { font: bold 8px "Liberation Serif", serif; }`;
  }
  markup() {
    const holes = [[783, 339.5], [737, 361], [827.5, 368.5], [845.5, 431.5], [826, 491], [780.5, 512.5], [736, 484]]
      .map(([x, y]) => `<ellipse cx="${x}" cy="${y}" rx="7.700" ry="10.800" fill="url(#hole)" stroke="#0d0a05"/>`).join('');
    const tasks = ['home', 'library', 'files', 'swsearch', 'palette', 'ball'].map(n => `<button aria-label="${n}"><sw-icon name="${n}"></sw-icon></button>`).join('');
    return `
      <svg class="scene" viewBox="183 99 1151 556">
        <defs>
          <linearGradient id="hole" x2="0" y2="1"><stop stop-color="#17120b"/><stop offset=".25" stop-color="#33291a"/><stop offset=".75" stop-color="#a88d60"/><stop offset="1" stop-color="#b99d6c"/></linearGradient>
          <linearGradient id="side" x2="0" y2="1"><stop stop-color="#9f875b"/><stop offset=".25" stop-color="#b49866"/><stop offset=".55" stop-color="#7d6946"/><stop offset=".75" stop-color="#2a2217"/><stop offset=".85" stop-color="#15110b"/><stop offset="1" stop-color="#15110b"/></linearGradient>
          <linearGradient id="fillet" x2="0" y2="1"><stop stop-color="#9b8358"/><stop offset=".3" stop-color="#c2a572"/><stop offset=".55" stop-color="#9c8357"/><stop offset=".75" stop-color="#5d4c32"/><stop offset=".9" stop-color="#1a150d"/><stop offset="1" stop-color="#4b3e29"/></linearGradient>
          <linearGradient id="tube" gradientUnits="userSpaceOnUse" x1="760" y1="370" x2="750" y2="484"><stop stop-color="#a88e60"/><stop offset=".2" stop-color="#b99c6a"/><stop offset=".5" stop-color="#87724d"/><stop offset=".75" stop-color="#30271a"/><stop offset=".87" stop-color="#15110b"/></linearGradient>
          <linearGradient id="ring" x2="0" y2="1"><stop stop-color="#aa9062"/><stop offset=".25" stop-color="#d6b984"/><stop offset=".5" stop-color="#a0875b"/><stop offset=".75" stop-color="#332919"/><stop offset=".9" stop-color="#15110b"/></linearGradient>
          <linearGradient id="bore" x2="0" y2="1"><stop offset=".08" stop-color="#17130d"/><stop offset=".3" stop-color="#57482f"/><stop offset=".6" stop-color="#9d8459"/><stop offset=".8" stop-color="#b89b69"/></linearGradient>
          <linearGradient id="rim" x2="0" y2="1"><stop stop-color="#15110b"/><stop offset=".2" stop-color="#332a1b"/><stop offset=".4" stop-color="#8a7550"/><stop offset="1" stop-color="#b79a69"/></linearGradient>
          <radialGradient id="green" cx=".38" cy=".28" r=".75"><stop stop-color="#8aec9a"/><stop offset=".25" stop-color="#36bd5a"/><stop offset=".6" stop-color="#168438"/><stop offset="1" stop-color="#032c10"/></radialGradient>
          <filter id="soft" x="-20%" y="-80%" width="140%" height="260%"><feGaussianBlur stdDeviation="4 1"/></filter>
          <filter id="glow" filterUnits="userSpaceOnUse" x="770" y="340" width="80" height="160"><feGaussianBlur stdDeviation="3.500"/></filter>
          <clipPath id="boss"><ellipse cx="782" cy="426" rx="53" ry="72"/></clipPath>
        </defs>
        <g filter="url(#soft)" fill="#2c1c14">
          <path d="M668 532q50-6 118-3l104 8q-60 2-126 1-66-1-96-6z" opacity=".9"/>
          <path d="M690 525q40-2 80 4l-10 5z" opacity=".6"/>
          <path d="M472 518q28-3 58 0-30 3-58 0z" opacity=".6"/>
        </g>
        <g stroke="#0d0a05" fill="none">
          <path d="M780 321l18-1.500c43 0 77 47 77 106s-34 105.500-77 105.500h-16z" fill="url(#side)"/>
          <ellipse cx="782.500" cy="426" rx="77" ry="105" fill="#7d6b4a"/>
          ${holes}
          <ellipse cx="782" cy="426" rx="53" ry="72.500" fill="url(#fillet)"/>
          <g clip-path="url(#boss)"><path d="M795 362q22 12 29 42 3 14 3 32" stroke="#f6dfa8" stroke-width="7" filter="url(#glow)"/><path d="M810 376q12 14 15 34" stroke="#fff2c8" stroke-width="5" filter="url(#glow)"/></g>
          <ellipse cx="782" cy="426" rx="53" ry="72.500"/>
          <ellipse cx="776" cy="427" rx="44.500" ry="61" fill="url(#ring)"/>
          <ellipse cx="766" cy="428" rx="42.500" ry="57.500" fill="url(#ring)"/>
          <path d="M711 381l24-4 22-6c25 1 43 27 43 57s-16 54-38 56l-23-4z" fill="url(#tube)"/>
          <path d="M735 382q28 1 39 25 7 21-1 44-8 20-28 28" stroke="#1b150d"/>
          <path d="M700 381.500q12-1 25-.5c22 1 36 9 45 23q8 12 8 27-1 19-13 32-12 15-25 17h-25q-15-1-22-4-5-4-7-15-4-27 1-58 3-18 13-21.500z" fill="url(#rim)"/>
          <path d="M703 387q15-2 31 0 22 3 33 20 7 11 7 24 0 17-12 29-12 13-25 14-18 1-33-1-10-2-13-13-6-30-1-56 3-15 13-17z" fill="url(#bore)"/>
          <path d="M709 387q-15 8-18 31-2 30 11 45 9 9 23 10M730 388q-11 16-11 43t20 42"/>
          <path d="M763 407q-6 22 3 45 7-9 6-23-1-13-9-22z" fill="#94807a"/>
          <path d="M694 390q3-8 16-9h18q31 5 43 27" stroke="#14100a" stroke-width="4"/>
          <path d="M774 428h6M776 424v8" stroke="#c7a870"/>
        </g>
        <circle cx="504.500" cy="370" r="13" fill="url(#green)" stroke="#052a10"/>
        <path d="M216 597v-24" stroke="#1c6c22" stroke-width="4"/><path d="M216 596v-23" stroke="#8ce08c"/><path d="M211 576l5-9 5 9z" fill="#157019"/>
        <path d="M222 595l12-4v7z" fill="#9c251e"/><path d="M215 597h14" stroke="#16168c" stroke-width="4"/><path d="M228 592l10 5.500-10 5z" fill="#1d1dd0"/>
        <text x="212" y="565" fill="#0d8a16">Y</text><text x="234" y="595" fill="#f02018">X</text><text x="237" y="604" fill="#1818e8">Z</text>
      </svg>
      <div class="heads">
        <sw-tool icon="zoomfit"></sw-tool><sw-tool icon="zoomarea"></sw-tool><sw-tool icon="prevview"></sw-tool><sw-tool icon="section"></sw-tool>
        <sw-tool icon="orient" drop></sw-tool><sw-tool icon="display" drop></sw-tool><sw-tool icon="glasses" drop></sw-tool>
        <sw-tool icon="scene" drop></sw-tool><sw-tool icon="settings" drop></sw-tool>
      </div>
      <div class="doc"><sw-tool icon="docmin"></sw-tool><sw-tool icon="docrestore"></sw-tool><sw-tool icon="docclose"></sw-tool></div>
      <div class="tasks">${tasks}</div>`;
  }
}

class SwMotionBar extends SwElement {
  styles() {
    return `
      :host { display: flex; align-items: center; height: 24px; flex: none; overflow: hidden; background: #cfd3e6; border-top: 1px solid #e6e8f2; border-bottom: 1px solid #000; color: #222; }
      .study { position: relative; width: 89px; margin-right: 3px; flex: none; }
      .study select { appearance: none; display: block; width: 100%; height: 20px; padding: 0; border: 1px solid #8a8ca0; border-left: 0; border-radius: 0 3px 3px 0; outline: 0;
        background: linear-gradient(#fafafc, #dcdde4); font: inherit; color: #000; }
      sw-caret.big { border-width: 4px; border-bottom: 0; }
      .study sw-caret { position: absolute; right: 5px; top: 9px; pointer-events: none; }
      .group { display: flex; align-items: center; gap: 7px; height: 18px; padding: 0 7px; border-left: 1px solid #7b7e92; flex: none; }
      input[type=range] { appearance: none; width: 185px; height: 20px; margin: 0 8px 0 4px; background: none; }
      input[type=range]::-webkit-slider-runnable-track { height: 5px; background: #fff; border: 1px solid #b0b2c2; }
      input[type=range]::-webkit-slider-thumb { appearance: none; width: 9px; height: 15px; margin-top: -7px; border: 1px solid #70727e; border-radius: 2px 2px 5px 5px; background: linear-gradient(90deg, #fff, #d4d5da); }
      .speed { display: flex; align-items: center; width: 63px; height: 20px; padding: 0 3px 0 2px; background: #fff; border: 1px solid #e0e2ee; justify-content: space-between; flex: none; }
      .speed input { width: 29px; height: 14px; padding: 0; border: 0; outline: 0; background: #3399ff; color: #fff; font: 11px/14px "Liberation Sans", sans-serif; }
      .mode { --drop-width: 20px; margin: 0 2px 0 6px; }
      .film { margin-right: 7px; }
      .grow { flex: 1; }
      .last { margin-right: -8px; }`;
  }
  markup() {
    const tools = (...names) => names.map(n => `<sw-tool icon="${n}"></sw-tool>`).join('');
    return `
      <div class="study"><select aria-label="study type"><option>装配体运动</option></select><sw-caret class="big"></sw-caret></div>
      <div class="group">${tools('calc', 'playstart', 'play', 'stop')}</div>
      <input type="range" value="0" aria-label="timeline">
      <div class="speed"><input value="100%" aria-label="zoom"><sw-caret class="big"></sw-caret></div>
      <sw-tool class="mode" icon="arrow" drop></sw-tool>
      <sw-tool class="film" icon="savefilm"></sw-tool>
      <div class="group">${tools('wizard')}</div>
      <div class="group">${tools('autokey', 'addkey')}</div>
      <div class="group">${tools('motor', 'spring', 'contact', 'apple')}</div>
      <div class="group">${tools('list')}</div>
      <div class="grow"></div>
      <sw-tool class="last" icon="collapse"></sw-tool>`;
  }
}

class SwStudyTabs extends SwElement {
  styles() {
    return `
      :host { display: flex; height: 14px; flex: none; background: #e0e4ec; line-height: 12px; }
      .nav { display: flex; width: 60px; flex: none; overflow: hidden; }
      .nav button { width: 15px; flex: none; border: 1px solid #9092a6; background: #c4c6d4; display: flex; align-items: center; justify-content: center; }
      .nav svg { width: 9px; height: 9px; fill: #8c8ea4; }
      .tab { padding: 0 10px; border: 1px solid #50526a; border-top: 0; background: #b6b8ca; white-space: nowrap; }
      .tab.on { padding: 0 15px 0 7px; margin-left: -1px; background: #e0e2ec; font-weight: bold; color: #000; }`;
  }
  markup() {
    const nav = ['M0 0h1v9H0zM8 0v9L2 4.500z', 'M7 0v9L2 4.500z', 'M2 0v9l5-4.500z', 'M8 0h1v9H8zM1 0v9l6-4.500z']
      .map((d, i) => `<button aria-label="tab ${i + 1}"><svg viewBox="0 0 9 9"><path d="${d}"/></svg></button>`).join('');
    return `<div class="nav">${nav}</div><button class="tab">模型</button><button class="tab on">运动算例 1</button>`;
  }
}

class SwStatusBar extends SwElement {
  styles() {
    return `
      :host { position: relative; display: block; height: 8px; flex: none; border-top: 1px solid #55586a; background: #c8cce0; font: 12px/16px "Noto Sans", sans-serif; }
      .text { height: 7px; overflow: hidden; white-space: nowrap; color: #111; }
      .float { position: absolute; right: 134px; top: 0; width: 338px; height: 7px; display: flex; overflow: hidden; border-radius: 4px 4px 0 0; background: #eef4fc; border-top: 1px solid #78b4ea; }
      .float span { width: 136px; padding-left: 8px; }
      .float b { flex: 1; background: #5b94e2; border-radius: 5px 0 0 0; }
      .float em { width: 37px; background: #86b4e8; border-radius: 0 5px 0 0; }
      .tray { position: absolute; right: 22px; top: 2px; display: flex; gap: 54px; height: 5px; overflow: hidden; }
      .tray sw-icon { width: 14px; height: 14px; }
      .mark { position: absolute; right: 20px; bottom: 3px; font: bold 16px/20px "DejaVu Sans", "Noto Sans CJK SC", sans-serif; white-space: nowrap; color: #fff;
        text-shadow: 1px 0 #f02030, -1px 0 #f02030, 0 1px #f02030, 0 -1px #f02030; }`;
  }
  markup() {
    return `<div class="text">SolidWorks Office Premium 2009</div>
      <div class="float"><span><sw-icon name="list"></sw-icon></span><b></b><em></em></div>
      <div class="tray"><sw-icon name="askbox"></sw-icon><sw-icon name="tag"></sw-icon></div>
      <div class="mark">三维网www.3dportal.cn</div>`;
  }
}

class SwApp extends SwElement {
  styles() {
    return `
      :host { display: flex; flex-direction: column; height: 100vh; }
      main { position: relative; display: flex; flex: 1; min-height: 0; }
      sw-command-tabs { position: absolute; z-index: 3; left: 0; top: -1px; }`;
  }
  markup() {
    return `<sw-title-bar></sw-title-bar><sw-ribbon></sw-ribbon>
      <main><sw-feature-panel></sw-feature-panel><sw-viewport></sw-viewport><sw-command-tabs></sw-command-tabs></main>
      <sw-motion-bar></sw-motion-bar><sw-study-tabs></sw-study-tabs><sw-status-bar></sw-status-bar>`;
  }
}

customElements.define('sw-icon', SwIcon);
customElements.define('sw-caret', SwCaret);
customElements.define('sw-tool', SwTool);
customElements.define('sw-menu-item', SwMenuItem);
customElements.define('sw-title-bar', SwTitleBar);
customElements.define('sw-command', SwCommand);
customElements.define('sw-ribbon', SwRibbon);
customElements.define('sw-command-tabs', SwCommandTabs);
customElements.define('sw-tree-row', SwTreeRow);
customElements.define('sw-feature-panel', SwFeaturePanel);
customElements.define('sw-viewport', SwViewport);
customElements.define('sw-motion-bar', SwMotionBar);
customElements.define('sw-study-tabs', SwStudyTabs);
customElements.define('sw-status-bar', SwStatusBar);
customElements.define('sw-app', SwApp);
</script>
</body>
</html>
